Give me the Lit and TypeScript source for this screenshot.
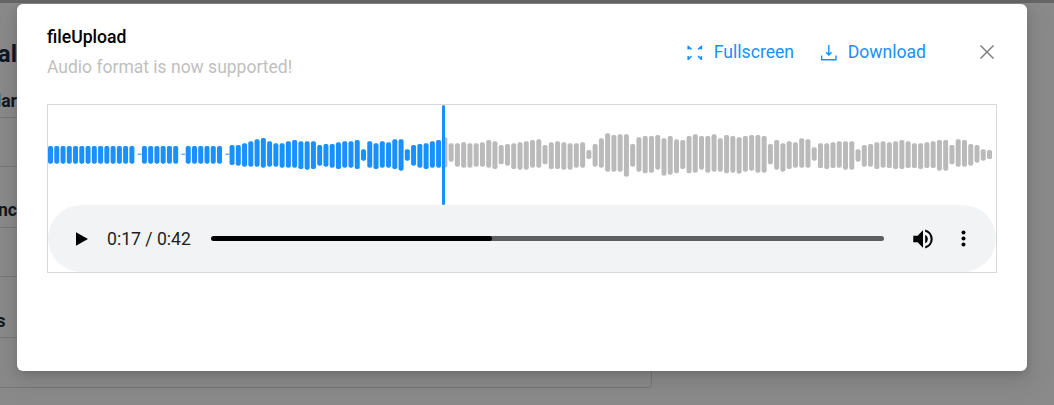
import { LitElement, html, css, svg } from "lit";
import { customElement } from "lit/decorators.js";

// Bars: [top, bottom], in tripled pixels measured from y=100 of the page.
const flat = (n: number): [number, number][] => Array.from({ length: n }, () => [138, 191]);
const dash: [number, number][] = [[161, 164]];
const bars: [number, number][] = [
  ...flat(14), ...dash, ...flat(6), ...dash, ...flat(6), ...dash,
  [135,195],[135,197],[130,200],[124,200],[118,200],[114,203],[124,200],
  [130,200],[130,203],[124,203],[120,203],[124,207],[124,209],[124,207],[135,197],[132,200],[132,203],
  [127,207],[124,203],[124,203],[120,207],[148,182],[124,203],[130,207],[124,203],[127,203],[118,207],
  [118,212],[148,182],[135,197],[132,203],[130,207],[124,203],[120,203],
  [112,203],[130,185],[130,200],[127,203],[130,203],[130,200],[127,200],[120,203],[124,207],[135,193],
  [132,197],[130,207],[127,209],[124,209],[120,203],[118,203],[135,193],[127,207],[124,207],[127,209],
  [130,209],[130,203],[127,203],[150,177],[132,200],[115,203],[100,215],[105,215],[103,215],[103,230],
  [132,200],[112,215],[108,220],[108,218],[105,209],[115,227],[108,224],[118,220],[120,207],[108,220],
  [103,218],[108,209],[108,218],[103,215],[115,215],[105,220],[108,218],[112,221],[108,215],
  [105,212],[105,218],[108,218],[132,193],[120,209],[130,215],[124,207],[127,203],[115,203],[118,203],
  [142,182],[130,204],[130,207],[127,204],[124,203],[124,209],[124,209],[148,185],[135,200],[132,200],
  [127,207],[124,203],[127,204],[124,207],[120,207],[124,204],[130,204],[130,207],[127,204],[124,204],
  [120,212],[120,212],[135,193],[118,200],[120,200],[132,197],[135,188],[148,182],[150,177],
];

const PLAYED = 63;
const PITCH = 6.26;

@customElement("app-root")
export class AppRoot extends LitElement {
  static styles = css`
    :host {
      display: block;
      position: relative;
      width: 1054px;
      height: 405px;
      overflow: hidden;
      background: #8a8a8a;
      font-family: Roboto, "Liberation Sans", sans-serif;
    }
    .page { position: absolute; inset: 0; }
    .strip { height: 3px; background: #666; }
    .frag {
      position: absolute;
      left: 0;
      width: 17px;
      overflow: hidden;
      white-space: nowrap;
      direction: rtl;
      color: #101820;
      font-weight: 700;
      font-size: 17.6px;
      line-height: 20px;
    }
    .f1 { top: 40px; font-size: 24px; line-height: 28px; color: #0b1a26; }
    .f2 { top: 91px; }
    .f3 { top: 200px; }
    .f4 { top: 311px; width: 5.5px; }
    .rule { position: absolute; left: 0; width: 17px; height: 1px; background: #777; }
    .card-edge {
      position: absolute;
      left: -4px;
      top: 337px;
      width: 654px;
      height: 49px;
      border: 1px solid #777;
      border-radius: 4px;
    }
    .modal {
      position: absolute;
      left: 17px;
      top: 4px;
      width: 1010px;
      height: 367px;
      box-sizing: border-box;
      padding: 23px 30px 0;
      background: #fff;
      border-radius: 6px;
      box-shadow: 0 3px 8px -2px rgba(0,0,0,.14), 0 6px 16px rgba(0,0,0,.08), 0 9px 28px 8px rgba(0,0,0,.05);
    }
    .head { display: flex; justify-content: space-between; align-items: flex-start; height: 77px; }
    .title { font-size: 17.6px; line-height: 21px; font-weight: 500; color: #000; }
    .sub { margin-top: 9px; font-size: 17.5px; line-height: 21px; color: #bfbfbf; }
    .actions { display: flex; align-items: center; margin-top: 15px; color: #1890ff; font-size: 17.6px; line-height: 21px; }
    .action { display: flex; align-items: center; gap: 10px; }
    .action + .action { margin-left: 26px; }
    .close { margin-left: 53px; margin-right: 2px; display: block; position: relative; top: -1px; }
    .box {
      width: 950px;
      height: 169px;
      box-sizing: border-box;
      border: 1px solid #d9d9d9;
      display: flex;
      flex-direction: column;
    }
    .wave { display: block; height: 100px; flex: none; }
    .player {
      flex: 1;
      border-radius: 34px;
      background: #f1f3f4;
      display: flex;
      align-items: center;
      padding: 0 30px 0 26px;
      color: #1f1f1f;
      font-size: 17.6px;
    }
    .time { margin-left: 17px; white-space: nowrap; }
    .track { flex: 1; height: 5px; margin: 0 26px 0 20px; border-radius: 2.5px; background: #5e5e5e; overflow: hidden; }
    .fill { height: 100%; background: #000; border-radius: 2.5px; }
    .more { margin-left: 25px; }
    svg { display: block; flex: none; }
  `;

  private waveform() {
    return html`<svg class="wave" width="948" height="100" viewBox="0 0 948 100">
      ${bars.map(([t, b], i) => {
        const isDash = b - t < 5;
        const x = (isDash ? 2 : 0) + i * PITCH;
        const y = t / 3 - 5;
        return svg`<rect x=${x} y=${y} width=${isDash ? 3.8 : 5} height=${(b - t) / 3}
          rx=${isDash ? 0 : 1.8} fill=${i < PLAYED ? "#1890ff" : "#bababa"}></rect>`;
      })}
      <rect x="394" y="0" width="3" height="100" rx="1.5" fill="#1890ff"></rect>
    </svg>`;
  }

  render() {
    return html`
      <div class="page">
        <div class="strip"></div>
        <div class="frag f1">al</div>
        <div class="frag f2">lar</div>
        <div class="rule" style="top:117px"></div>
        <div class="rule" style="top:166px"></div>
        <div class="frag f3">anc</div>
        <div class="rule" style="top:227px"></div>
        <div class="rule" style="top:276px"></div>
        <div class="frag f4">s</div>
        <div class="card-edge"></div>
      </div>
      <div class="modal">
        <div class="head">
          <div>
            <div class="title">fileUpload</div>
            <div class="sub">Audio format is now supported!</div>
          </div>
          <div class="actions">
            <div class="action">
              <svg width="17.6" height="17.6" viewBox="0 0 16 16" fill="none" stroke="#1890ff" stroke-width="1.4">
                <path d="M2 5V2.2H2.2L5 5M11 5L13.8 2.2H14V5M2 11v2.8h.2L5 11M11 11l2.8 2.8h.2V11" />
              </svg>
              <span>Fullscreen</span>
            </div>
            <div class="action">
              <svg width="17.6" height="17.6" viewBox="0 0 16 16" fill="none" stroke="#1890ff" stroke-width="1.3">
                <path d="M8 1v8.5M5.5 7.5 8 10l2.5-2.5M1.5 10.5v3.8h13v-3.8" />
              </svg>
              <span>Download</span>
            </div>
            <svg class="close" width="16" height="16" viewBox="0 0 16 16" fill="none" stroke="#808080" stroke-width="1.5">
              <path d="M1.5 1.5 14.5 14.5M14.5 1.5 1.5 14.5" />
            </svg>
          </div>
        </div>
        <div class="box">
          ${this.waveform()}
          <div class="player">
            <svg width="16" height="16" viewBox="0 0 16 16"><path d="M2 1.2 14 8 2 14.8z" fill="#000" /></svg>
            <span class="time">0:17 / 0:42</span>
            <div class="track"><div class="fill" style="width:41.8%"></div></div>
            <svg width="26" height="26" viewBox="0 0 24 24"><path fill="#000" d="M3 9v6h4l5 5V4L7 9H3zm13.5 3A4.5 4.5 0 0 0 14 7.97v8.05A4.5 4.5 0 0 0 16.5 12zM14 3.23v2.06a7 7 0 0 1 0 13.42v2.06a9 9 0 0 0 0-17.54z" /></svg>
            <svg class="more" width="5" height="17" viewBox="0 0 5 17"><circle cx="2.5" cy="2.5" r="2" /><circle cx="2.5" cy="8.5" r="2" /><circle cx="2.5" cy="14.5" r="2" /></svg>
          </div>
        </div>
      </div>
    `;
  }
}
